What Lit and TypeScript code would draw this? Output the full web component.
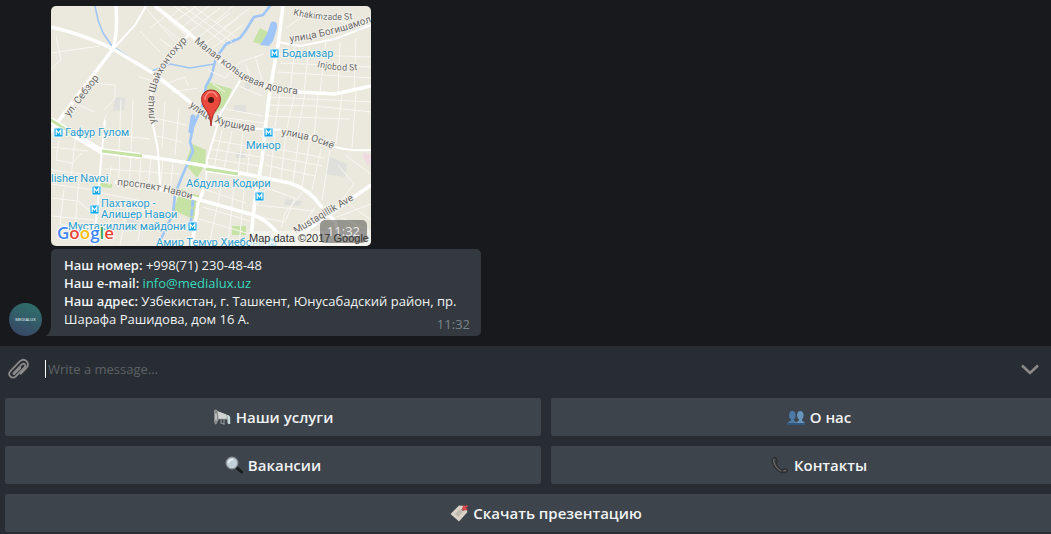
import { LitElement, html, css, svg } from "lit";
import { customElement } from "lit/decorators.js";

const majorRoads = [
  "M51 27Q85 35 113 49L153 73 190 102 212 118",
  "M113 49L84 87 48 135",
  "M113 49Q118 32 116 6",
  "M155 6L190 34 205 48Q232 75 262 86L300 92 335 94 371 86",
  "M283 6L278 45 270 90 265 130 262 160 255 200 250 246",
  "M51 122L72 135 100 151 150 157 195 164 215 168 255 176 290 183Q310 190 320 205L335 222 342 246",
  "M115 182L150 187 190 197 250 214Q272 220 285 246",
  "M371 185L340 207 300 235",
  "M206 184L198 204 192 246",
];

const midRoads = [
  "M113 49L135 25 146 6",
  "M189 34L170 56Q153 72 151 90L153 125 158 150 160 185",
  "M241 79L221 113 207 160 206 184",
  "M105 120L101 160 98 200 94 246",
  "M278 42L300 46 335 39 371 25",
  "M212 124L240 128 285 130 315 138Q335 152 371 150",
];

const minorRoads = [
  "M51 69L61 60 56 36M51 53L100 46M90 83L115 85 115 98 104 110M106 115L103 125M78 105L95 112M139 77L165 84 185 77 188 86M171 92L198 88M144 6L175 42M150 28L168 14M140 31L160 52M160 39L178 52M163 26L183 43M168 20L190 38",
  "M174 6L225 44M183 6L232 42M193 6L237 38M168 18L184 6M174 22L197 6M181 28L209 6M188 33L220 8M195 40L230 13M202 46L238 18M209 51L244 24M215 22L233 6M223 28L250 8",
  "M208 70L225 78 240 62 264 54M246 65L250 77M255 56L262 80M280 54L371 57M280 63L371 67M278 72L371 78M295 46L290 92M309 46L304 92M326 40L320 93M340 42L338 92M356 38L354 90M286 28L305 15 371 27",
  "M213 84L225 92M239 86L262 96M226 109L263 116M220 117L264 123M269 97L371 102M268 105L315 106 371 112M266 116L350 119M280 94L275 127M295 93L287 128M305 94L298 130M318 94L314 137M342 94L336 144M356 92L352 148",
  "M213 140L257 148M211 149L260 157M208 158L259 166M222 130L214 167M232 131L224 168M243 133L238 173M250 148L247 174M267 147L325 158M266 155L322 166M265 165L315 176M275 132L270 178M286 133L281 180M299 136L293 183M310 140L302 187M321 149L312 190M330 150L322 200",
  "M258 185L295 198 285 222 255 216M265 190L257 205 315 211M303 192L285 213 281 228M338 165L354 184 338 205M345 155L371 174M341 218L371 231M349 204L371 220M315 207L289 246M334 218L371 204",
  "M51 147L88 151M60 133L56 160 72 163 82 153M75 139L71 178M51 170L99 176M51 184L95 190M51 198L78 201 95 215M64 190L60 224 91 230M51 216L94 220M79 178L75 227M101 193L147 202M111 165L109 185M120 155L118 187M131 156L129 188M141 157L139 190M151 158L148 191M112 202L107 239M128 205L120 245M144 203L138 241",
  "M105 169L180 174M163 159L160 190M173 163L170 192M103 134L150 139M121 100L119 150M133 99L131 152M165 102L162 148M179 108L175 155M154 118L186 125M157 136L182 142M206 190L246 203M203 207L250 221M199 219L250 234M222 183L210 241M234 185L228 246M245 180L239 246",
];

const curves = [
  ["c-kolc", "M194 42Q217 61 240 77T310 95"],
  ["c-bog", "M290 42Q330 37 371 22L380 18"],
  ["c-kha", "M293 15Q325 22 352 19L370 16"],
  ["c-inj", "M317 67Q340 72 358 70L372 68"],
  ["c-shay", "M156 123Q145 84 184 44L198 30"],
  ["c-hur", "M189 106Q213 128 257 131L270 132"],
  ["c-osi", "M281 135Q314 139 334 150L346 158"],
  ["c-nav", "M117 185Q160 189 191 199L206 205"],
  ["c-mus", "M296 234L365 193"],
  ["c-seb", "M69 117L110 64"],
];

const streetNames = [
  ["c-kolc", "Малая кольцевая дорога", 10],
  ["c-bog", "улица Богишамол", 10],
  ["c-kha", "Khakimzade St", 9],
  ["c-inj", "Injobod St", 9],
  ["c-shay", "улица Шайхонтохур", 10],
  ["c-hur", "улица Хуршида", 10],
  ["c-osi", "улица Осиё", 10],
  ["c-nav", "проспект Навои", 10],
  ["c-mus", "Mustaqillik Ave", 10],
  ["c-seb", "ул. Себзор", 10],
];

const stations = [
  [270, 49], [54, 128], [264, 128], [92, 186], [90, 205], [188, 222], [255, 192], [268, 238],
];

const stationNames = [
  [282, 57, "Бодамзар"],
  [65, 136, "Гафур Гулом"],
  [246, 149, "Минор"],
  [51, 182, "lisher Navoi"],
  [101, 207, "Пахтакор -"],
  [101, 218, "Алишер Навои"],
  [186, 187, "Абдулла Кодири"],
  [68, 230, "Мустакиллик майдони"],
  [156, 246, "Амир Темур Хиебони"],
];

@customElement("location-map")
export class LocationMap extends LitElement {
  static styles = css`
    :host { display: block; position: relative; width: 320px; border-radius: 5px; overflow: hidden; }
    .map { display: block; width: 100%; height: auto; }
    .overlay { position: absolute; inset: 0; }
    .street { fill: #6b6b6b; stroke: #f3f1ea; stroke-width: 2px; paint-order: stroke; font-family: Roboto, sans-serif; }
    .station { fill: #2b9dd0; stroke: #f5f4ee; stroke-width: 2px; paint-order: stroke; font: 11px Roboto, sans-serif; }
    .brand { font: 600 17px "Open Sans", sans-serif; stroke: #ffffff; stroke-width: 2px; paint-order: stroke; }
    .credit { font: 11px "Liberation Sans", sans-serif; fill: #333333; }
    .time { position: absolute; right: 4px; bottom: 3px; padding: 2px 7px 3px; border-radius: 5px; background: rgba(80, 80, 76, 0.55); color: #e8e8e8; font: 13px/18px "Open Sans", sans-serif; }
  `;

  render() {
    return html`
      <svg class="map" viewBox="51 6 320 240" role="img" aria-label="Map">
        <defs>${curves.map(([id, d]) => svg`<path id=${id} d=${d} />`)}</defs>
        <rect x="51" y="6" width="320" height="240" fill="#ebe8dd" />
        <g fill="#dfdfdc">
          <path d="M115 97l10 1-1 12-11 1zM330 157l17 7-2 13-20-3zM286 199l16 2-2 5-16-1zM234 105h12v7h-13zM246 81l5 3-2 6-5-2zM127 219h12v11h-14zM236 152h9v6h-9z" />
          <path d="M364 152l7 3v9l-4 1-4-8z" fill="#f0dbe1" />
        </g>
        <g fill="#c6e2a4">
          <path d="M260 28l10 5-9 11-8-2zM208 82l24 7-6 16-16 12-8-10zM192 144l14 6-1 15-8 13-12-14zM181 189l22 8-8 23-22-10zM100 183l12 1v4l-12-1zM232 226h14v9h-14z" />
        </g>
        <g fill="none" stroke="#9fc6f6" stroke-linejoin="round" stroke-linecap="round">
          <path d="M95 6L98 20 103 33 112 46 140 65 152 71 170 64 190 68 214 64" stroke-width="1.6" />
          <path d="M270 6l-7 9-9 2-8 13-6 8-14 6-10 14-5 19-5 9-3 18-10 23-3 15 3 9-10 23-8 20-2 20-15 31-6 10" stroke-width="2.6" />
          <path d="M193 117l-2 14" stroke-width="5" />
          <path d="M193 201l-3 29" stroke-width="3" stroke-dasharray="5 4" />
        </g>
        <path d="M271 22q7-2 6 6l-4 13-4 5-9-1 7-11z" fill="#9fc6f6" />
        <g fill="none" stroke="#f8f7f3" stroke-width="1">${minorRoads.map((d) => svg`<path d=${d} />`)}</g>
        <g fill="none" stroke="#ffffff" stroke-width="2" stroke-linejoin="round">${midRoads.map((d) => svg`<path d=${d} />`)}</g>
        <g fill="none" stroke="#ffffff" stroke-width="3.6" stroke-linejoin="round">${majorRoads.map((d) => svg`<path d=${d} />`)}</g>
        <path d="M51 120L73 134 101 151 140 156M206 169L240 174" fill="none" stroke="#ffffff" stroke-width="6" />
        <path d="M51 120L73 134M102 151L142 156M206 169L238 174" fill="none" stroke="#c6e2a4" stroke-width="3" />
        ${streetNames.map(([id, name, size]) => svg`<text class="street" font-size=${size}><textPath href=${"#" + id}>${name}</textPath></text>`)}
        ${stations.map(([x, y]) => svg`
          <rect x=${x} y=${y} width="9" height="9" fill="#16a7e8" stroke="#e8f6fc" stroke-width="1" />
          <path d=${`M${x + 2.2} ${y + 7}v-5l2.3 3 2.3-3v5`} fill="none" stroke="#ffffff" stroke-width="1.2" />`)}
        ${stationNames.map(([x, y, name]) => svg`<text class="station" x=${x} y=${y}>${name}</text>`)}
        <rect x="250" y="231" width="121" height="15" fill="#f5f5f2" fill-opacity="0.75" />
        <g>
          <path d="M211 126c-1-11-3-13-7-19-5-8-2-17 7-17s12 9 7 17c-4 6-6 8-7 19z" fill="#e9483d" stroke="#a52b25" stroke-width="1" />
          <path d="M205 100c0-5 3-8 6-8s5 2 6 5" fill="none" stroke="#ff8b80" stroke-width="1.4" />
          <circle cx="211" cy="100" r="3" fill="#4b1511" />
        </g>
        <text class="brand" x="57" y="239"><tspan fill="#4285f4">G</tspan><tspan fill="#ea4335">o</tspan><tspan fill="#fbbc05">o</tspan><tspan fill="#4285f4">g</tspan><tspan fill="#34a853">l</tspan><tspan fill="#ea4335">e</tspan></text>
      </svg>
      <span class="time">11:32</span>
      <svg class="map overlay" viewBox="51 6 320 240" aria-hidden="true">
        <text class="credit" x="369" y="242" text-anchor="end">Map data ©2017 Google</text>
      </svg>
    `;
  }
}

const icons: Record<string, unknown> = {
  megaphone: svg`
    <path d="M1.500 2q2-1.500 3 1l9 3.500q2 .5 2.500 3l.5 5-2 1-.5-4-8-.5-3 5.500q-2 0-2-7T1.500 2z" fill="#a9acac" />
    <path d="M5 3.500l8 3 .5 4-7.500.3z" fill="#d3d5d5" />
    <ellipse cx="3" cy="9" rx="2" ry="7" fill="#858889" />
    <ellipse cx="3" cy="9" rx="1" ry="4" fill="#bec0c0" />
    <path d="M14 7q3-.5 3.200 2.500V16h-2v-5z" fill="#c8dce1" />
    <path d="M8 11v4l3 1v-5" fill="none" stroke="#8b8f90" stroke-width="1.300" />`,
  people: svg`
    <g fill="#4b79a8">
      <path d="M2 7.500Q2 3 5.300 3t3.300 4.500Q8.500 10 7 11.500v1l3 2V17H.5v-2.500L4 12.500v-1Q2 10 2 7.500z" />
      <path d="M10 7.500Q10 3 13.300 3t3.300 4.500Q16.500 10 15 11.500v1l2.500 2V17H9v-2.500l3-2v-1q-2-1.500-2-4z" fill="#6594bd" />
    </g>
    <path d="M.5 15h17v2H.5z" fill="#31577f" />`,
  search: svg`
    <path d="M11.500 11.500l5 4.500" stroke="#17191b" stroke-width="3" stroke-linecap="round" />
    <circle cx="7" cy="7" r="5.800" fill="#c4d0d7" stroke="#8b9397" stroke-width="1.300" />
    <path d="M3.500 7Q4 3.500 8 3.500" fill="none" stroke="#e8f0f3" stroke-width="1.500" />`,
  phone: svg`
    <path d="M3 1.500q-3 1-1.500 5.500Q4 14 10 16.500q5 1.500 6.500-1 1-1.500-1-2.500-2.500-1-3.500.8-1 .7-2-.2Q6.500 11 5.500 8q-.3-1 .8-2Q7 4 5 2 4 1.200 3 1.500z" fill="#383a3b" stroke="#26282a" stroke-width="0.800" />
    <path d="M3 3q-1 3 1 6 2 4 6 6M12.500 15l2.500-.8" fill="none" stroke="#747677" stroke-width="1" />`,
  tag: svg`
    <path d="M.5 10L9 1.500l6 .5 2.500 6L9 17.500z" fill="#d9d2c6" />
    <path d="M5 10l5-5 3 3-5 5z" fill="#c2baad" />
    <circle cx="13" cy="5.500" r="1.500" fill="#8a7f75" />
    <path d="M12.500 6l5-4.500M13 5.500l1-4M13 5.500l4.500 0" stroke="#d8434b" stroke-width="1.700" />`,
};

const replies = [
  { icon: "megaphone", label: "Наши услуги" },
  { icon: "people", label: "О нас" },
  { icon: "search", label: "Вакансии" },
  { icon: "phone", label: "Контакты" },
  { icon: "tag", label: "Скачать презентацию", wide: true },
];

@customElement("app-root")
export class AppRoot extends LitElement {
  static styles = css`
    :host { display: flex; flex-direction: column; min-height: 100vh; overflow: hidden; background: #18191d; color: #f1f3f4; font: 13px/18px "Open Sans", sans-serif; }
    button { font: inherit; color: inherit; border: 0; margin: 0; cursor: pointer; }
    .chat { flex: 1; display: flex; flex-direction: column; justify-content: flex-end; gap: 3px; padding: 6px 9px 10px; }
    .location { margin-left: 42px; }
    .row { display: flex; align-items: flex-end; gap: 9px; }
    .avatar { width: 33px; height: 33px; flex: none; }
    .bubble { position: relative; max-width: 404px; padding: 7px 13px 8px; border-radius: 5px 5px 5px 0; background: #33393f; }
    .bubble p { margin: 0; }
    .bubble b { font-weight: 600; }
    .bubble a { color: #37d9bd; text-decoration: none; }
    .tail { position: absolute; left: -6px; bottom: 0; width: 6px; height: 11px; fill: #33393f; }
    .sent { position: absolute; right: 11px; bottom: 3px; color: #7b858c; }
    .panel { background: #282c33; padding-bottom: 2px; }
    .compose { display: flex; align-items: center; height: 46px; padding: 0 10px 6px 7px; }
    .tool { display: flex; padding: 0; background: none; }
    .caret { width: 1px; height: 18px; margin-left: 15px; background: #ffffff; }
    .message { flex: 1; min-width: 0; padding: 0 2px; border: 0; outline: 0; background: none; color: #f1f3f4; font: inherit; }
    .message::placeholder { color: #5d6266; opacity: 1; }
    .keyboard { display: grid; grid-template-columns: 1fr 1fr; gap: 10px; margin: 0 -36px 0 5px; }
    .reply { display: flex; align-items: center; justify-content: center; gap: 4px; height: 38px; padding: 0; border-radius: 2px; background: #3d444b; font-size: 15px; line-height: 20px; font-weight: 600; }
    .wide { grid-column: 1 / -1; }
  `;

  render() {
    return html`
      <main class="chat">
        <location-map class="location"></location-map>
        <div class="row">
          <svg class="avatar" viewBox="0 0 33 33" role="img" aria-label="Medialux">
            <defs><linearGradient id="g" x1="0.7" y1="0" x2="0.300" y2="1"><stop stop-color="#2f6f6b" /><stop offset="1" stop-color="#384766" /></linearGradient></defs>
            <circle cx="16.500" cy="16.500" r="16.500" fill="url(#g)" />
            <text x="16.500" y="18" text-anchor="middle" font-size="4" font-weight="600" fill="#d5e0e3">MEDIALUX</text>
          </svg>
          <div class="bubble">
            <svg class="tail" viewBox="0 0 6 11" aria-hidden="true"><path d="M6 0v11H0Q6 9 6 0z" /></svg>
            <p><b>Наш номер:</b> +998(71) 230-48-48</p>
            <p><b>Наш e-mail:</b> <a href="mailto:info@medialux.uz">info@medialux.uz</a></p>
            <p><b>Наш адрес:</b> Узбекистан, г. Ташкент, Юнусабадский район, пр. Шарафа Рашидова, дом 16 А.</p>
            <span class="sent">11:32</span>
          </div>
        </div>
      </main>
      <section class="panel">
        <div class="compose">
          <button class="tool" aria-label="Attach file">
            <svg width="23" height="24" viewBox="0 0 23 24" fill="none" stroke="#8a8a8a" stroke-width="1.800" stroke-linecap="round"><path d="M6.500 16l8.300-8.600q1.700-1.500 3 0 1.200 1.400-.3 3L8.700 19.500q-2.700 2.300-5.300 0-2.500-2.600 0-5.300L13 4.200q3.400-3 6.500 0 2.900 3.200 0 6.600l-5.800 6M6.800 15.700q-1.200 1.500.6 1.300l5.800-6" /></svg>
          </button>
          <span class="caret"></span>
          <input class="message" type="text" placeholder="Write a message..." aria-label="Message" />
          <button class="tool" aria-label="Hide keyboard">
            <svg width="22" height="18" viewBox="0 0 22 18" fill="none" stroke="#8a8a8a" stroke-width="2.600"><path d="M3 5.500l8 7.500 8-7.500" /></svg>
          </button>
        </div>
        <div class="keyboard">
          ${replies.map((r) => html`
            <button class=${r.wide ? "reply wide" : "reply"}>
              <svg width="19" height="18" viewBox="0 0 19 18" aria-hidden="true">${icons[r.icon]}</svg>
              <span>${r.label}</span>
            </button>`)}
        </div>
      </section>
    `;
  }
}
